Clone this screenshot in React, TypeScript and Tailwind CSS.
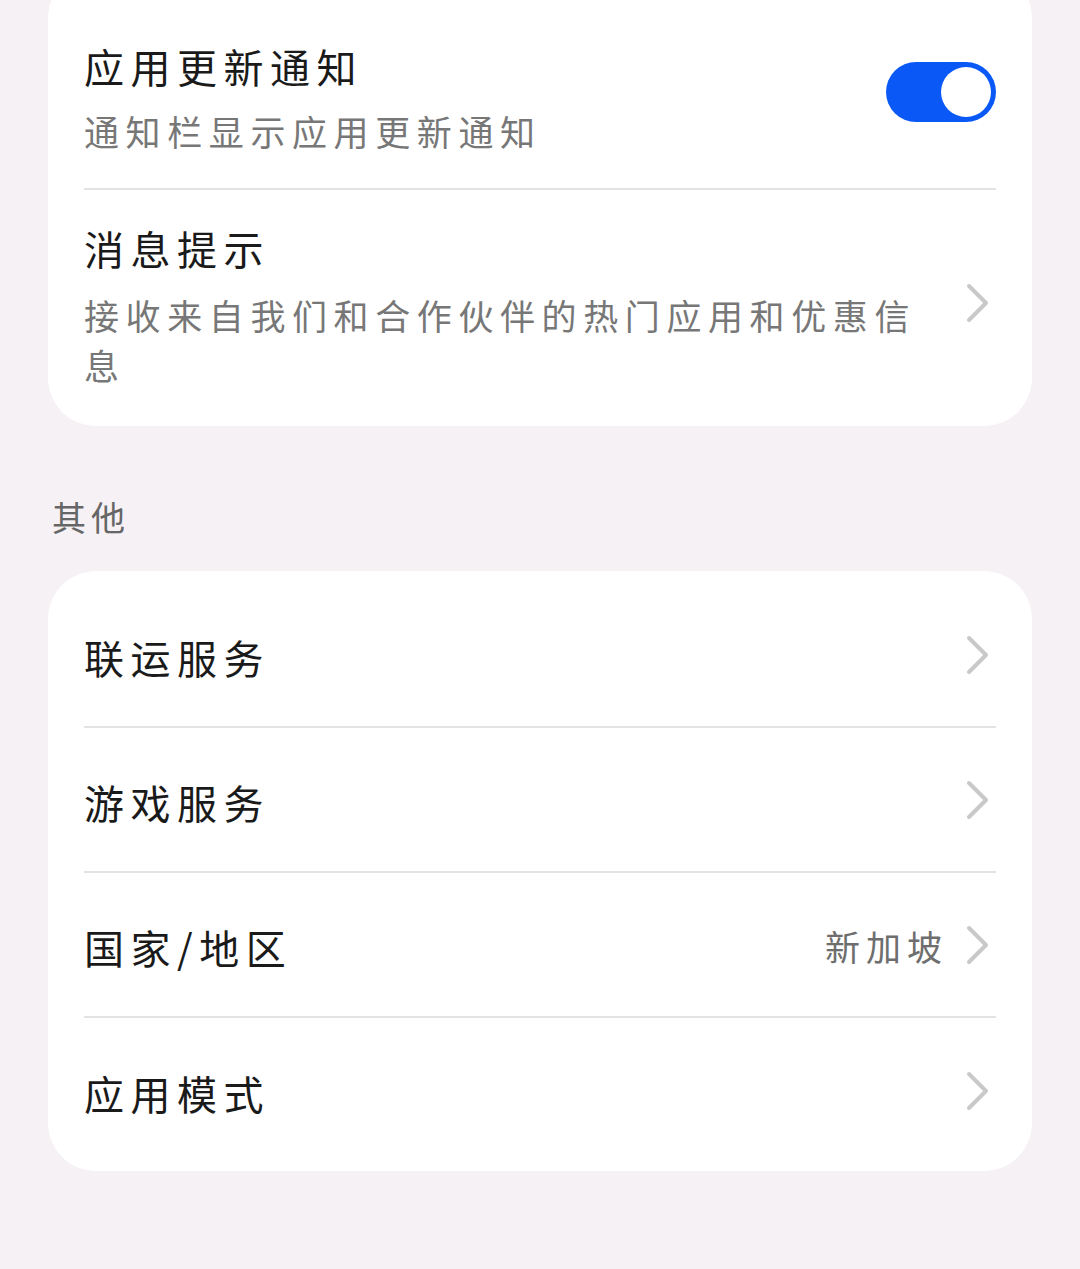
function Chevron() {
  return (
    <svg width="24" height="40" viewBox="0 0 24 40" className="shrink-0 mr-[6px]">
      <path d="M3 3 L20 20 L3 37" fill="none" stroke="#c9c9c9" strokeWidth="4" strokeLinecap="round" strokeLinejoin="round" />
    </svg>
  );
}

function Toggle() {
  return (
    <div className="w-[110px] h-[60px] rounded-full bg-[#0a59f7] flex items-center justify-end pr-[5px] shrink-0">
      <div className="w-[50px] h-[50px] rounded-full bg-white" />
    </div>
  );
}

function NavRow({ title, value, last }: { title: string; value?: string; last?: boolean }) {
  return (
    <div className={`h-[145px] flex items-center ${last ? '' : 'border-b-2 border-[#e3e3e3]'}`}>
      <p className="flex-1 text-[40px] leading-[50px] tracking-[6.5px] text-[#1a1a1a] pt-[4px]">{title}</p>
      {value && (
        <span className="text-[35px] tracking-[6px] text-[#6e6e6e] mr-[18px] pt-[4px]">{value}</span>
      )}
      <Chevron />
    </div>
  );
}

export default function App() {
  return (
    <div
      className="min-h-[1269px] bg-[#f5f1f5] px-[48px] overflow-hidden"
      style={{ fontFamily: '"Noto Sans CJK SC", "Noto Sans", sans-serif' }}
    >
      <section className="-mt-[30px] bg-white rounded-[48px] px-[36px]">
        <div className="flex items-start pt-[71px] pb-[32px] border-b-2 border-[#e3e3e3]">
          <div className="flex-1">
            <p className="text-[40px] leading-[50px] tracking-[6.5px] text-[#1a1a1a]">应用更新通知</p>
            <p className="mt-[15px] text-[35px] leading-[50px] tracking-[6.6px] text-[#777]">通知栏显示应用更新通知</p>
          </div>
          <div className="mt-[21px]">
            <Toggle />
          </div>
        </div>
        <div className="flex items-start pt-[33px] pb-[36px]">
          <div className="flex-1 max-w-[850px]">
            <p className="text-[40px] leading-[50px] tracking-[6.5px] text-[#1a1a1a]">消息提示</p>
            <p className="mt-[17px] text-[35px] leading-[50px] tracking-[6.6px] text-[#777]">
              接收来自我们和合作伙伴的热门应用和优惠信息
            </p>
          </div>
          <div className="ml-auto mt-[60px]">
            <Chevron />
          </div>
        </div>
      </section>

      <p className="mt-[66px] ml-[4px] text-[34px] leading-[50px] tracking-[5px] text-[#666]">其他</p>

      <section className="mt-[29px] bg-white rounded-[48px] px-[36px] pt-[12px] pb-[8px]">
        <NavRow title="联运服务" />
        <NavRow title="游戏服务" />
        <NavRow title="国家/地区" value="新加坡" />
        <NavRow title="应用模式" last />
      </section>
    </div>
  );
}
